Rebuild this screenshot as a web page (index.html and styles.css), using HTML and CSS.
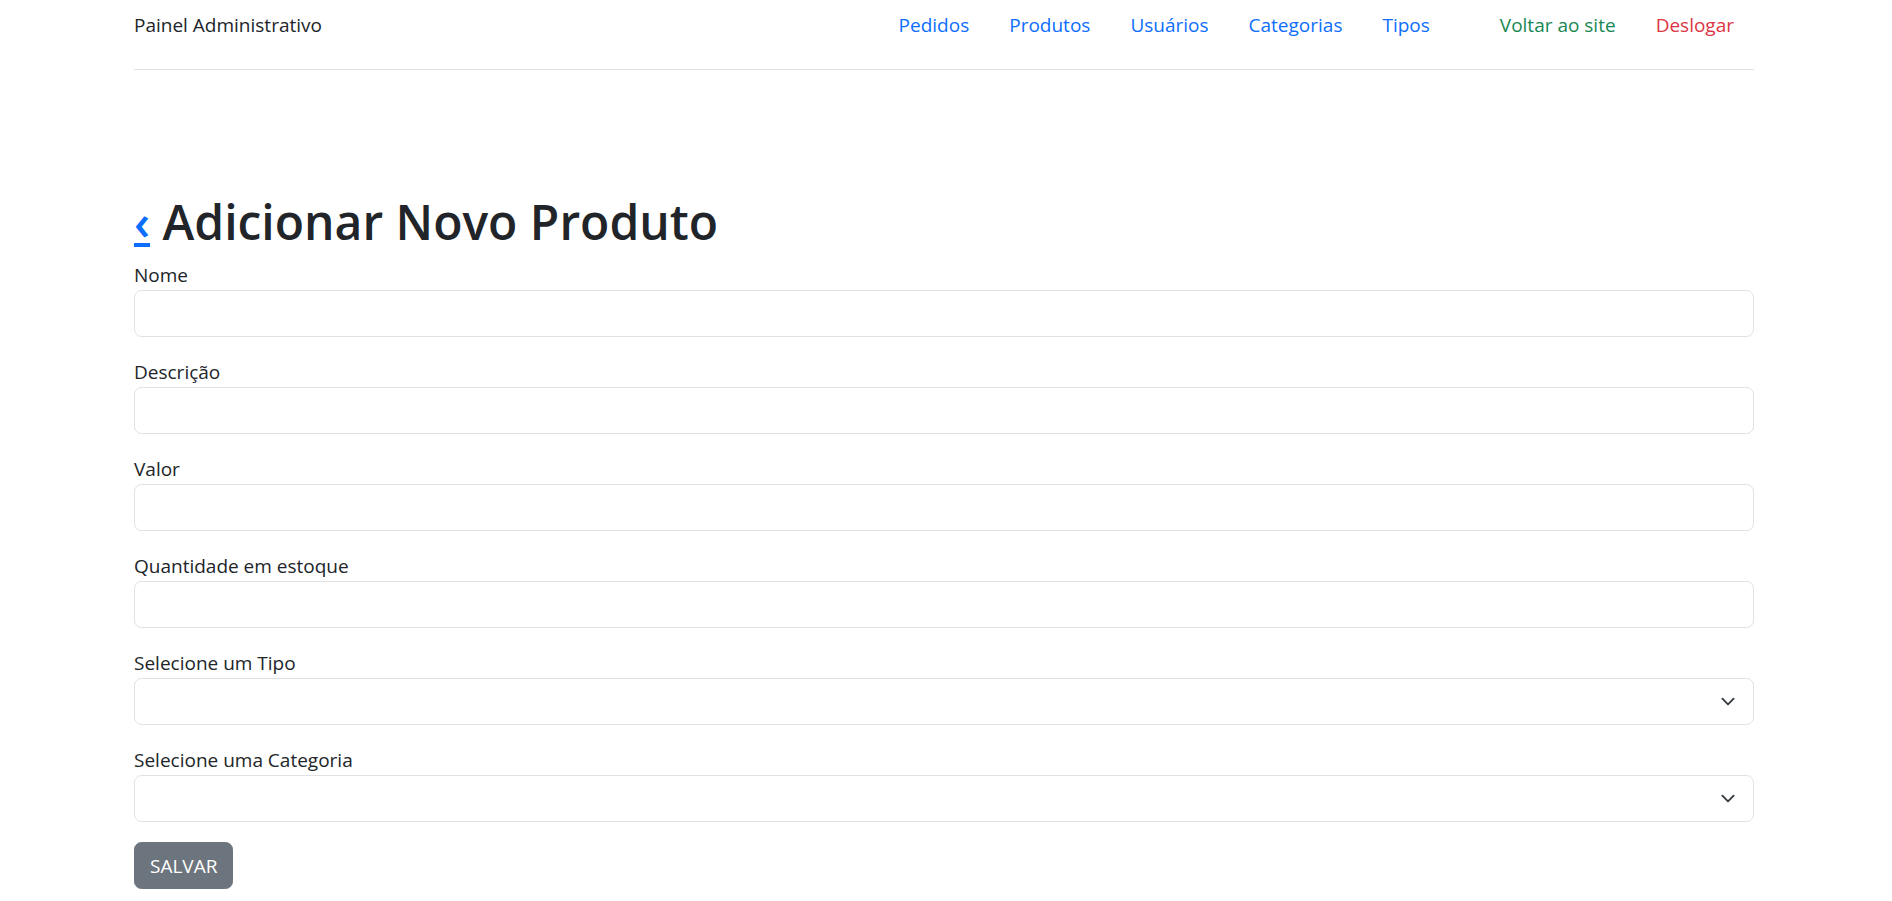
FILE: index.html
```html
<!DOCTYPE html>
<html lang="pt-BR">
<head>
<meta charset="utf-8">
<title>Adicionar Novo Produto</title>
<link rel="stylesheet" href="styles.css">
</head>
<body>
<div class="container">
  <header class="header">
    <span class="brand">Painel Administrativo</span>
    <nav class="nav">
      <a class="nav-link" href="#">Pedidos</a>
      <a class="nav-link" href="#">Produtos</a>
      <a class="nav-link" href="#">Usuários</a>
      <a class="nav-link" href="#">Categorias</a>
      <a class="nav-link" href="#">Tipos</a>
      <a class="nav-link nav-green nav-sep" href="#">Voltar ao site</a>
      <a class="nav-link nav-red" href="#">Deslogar</a>
    </nav>
  </header>

  <h1 class="title"><a class="back" href="#">‹</a> Adicionar Novo Produto</h1>

  <form class="form">
    <div class="field">
      <label class="label">Nome</label>
      <input class="control" type="text">
    </div>
    <div class="field">
      <label class="label">Descrição</label>
      <input class="control" type="text">
    </div>
    <div class="field">
      <label class="label">Valor</label>
      <input class="control" type="text">
    </div>
    <div class="field">
      <label class="label">Quantidade em estoque</label>
      <input class="control" type="text">
    </div>
    <div class="field">
      <label class="label">Selecione um Tipo</label>
      <select class="control select"><option></option></select>
    </div>
    <div class="field">
      <label class="label">Selecione uma Categoria</label>
      <select class="control select"><option></option></select>
    </div>
    <button class="btn" type="button">SALVAR</button>
  </form>
</div>
</body>
</html>
```

FILE: styles.css
```css
* { box-sizing: border-box; }
html, body { margin: 0; padding: 0; background: #fff; }
body {
  font-family: "Open Sans", "Noto Sans", sans-serif;
  font-size: 19px;
  line-height: 30px;
  color: #212529;
}
.container {
  margin: 0 138px 0 134px;
}
.header {
  display: flex;
  justify-content: space-between;
  align-items: flex-start;
  padding: 10px 0 29px;
  border-bottom: 1px solid #dee2e6;
}
.brand { color: #212529; }
.nav { display: flex; }
.nav-link {
  color: #0d6efd;
  text-decoration: none;
  padding: 0 20px;
}
.nav-sep { margin-left: 30px; }
.nav-green { color: #198754; }
.nav-red { color: #dc3545; }

.title {
  margin: 122px 0 8px;
  font-size: 48px;
  font-weight: 600;
  line-height: 60px;
}
.back {
  color: #0d6efd;
  text-decoration: underline;
}
.field { margin-bottom: 20px; display: flex; flex-direction: column; }
.label { display: block; }
.control {
  display: block;
  width: 100%;
  height: 47px;
  padding: 7px 15px;
  font: inherit;
  color: #212529;
  background: #fff;
  border: 1px solid #dee2e6;
  border-radius: 7.5px;
  appearance: none;
  -webkit-appearance: none;
  outline: none;
}
.select {
  background-image: url("data:image/svg+xml,%3csvg xmlns='http://www.w3.org/2000/svg' viewBox='0 0 16 16'%3e%3cpath fill='none' stroke='%23343a40' stroke-linecap='round' stroke-linejoin='round' stroke-width='2' d='m2 5 6 6 6-6'/%3e%3c/svg%3e");
  background-repeat: no-repeat;
  background-position: right 15px center;
  background-size: 20px 15px;
}
.btn {
  font: inherit;
  color: #fff;
  background: #6c757d;
  border: 1px solid #6c757d;
  border-radius: 7.5px;
  padding: 7.5px 15px;
  line-height: 30px;
  cursor: pointer;
}
```
